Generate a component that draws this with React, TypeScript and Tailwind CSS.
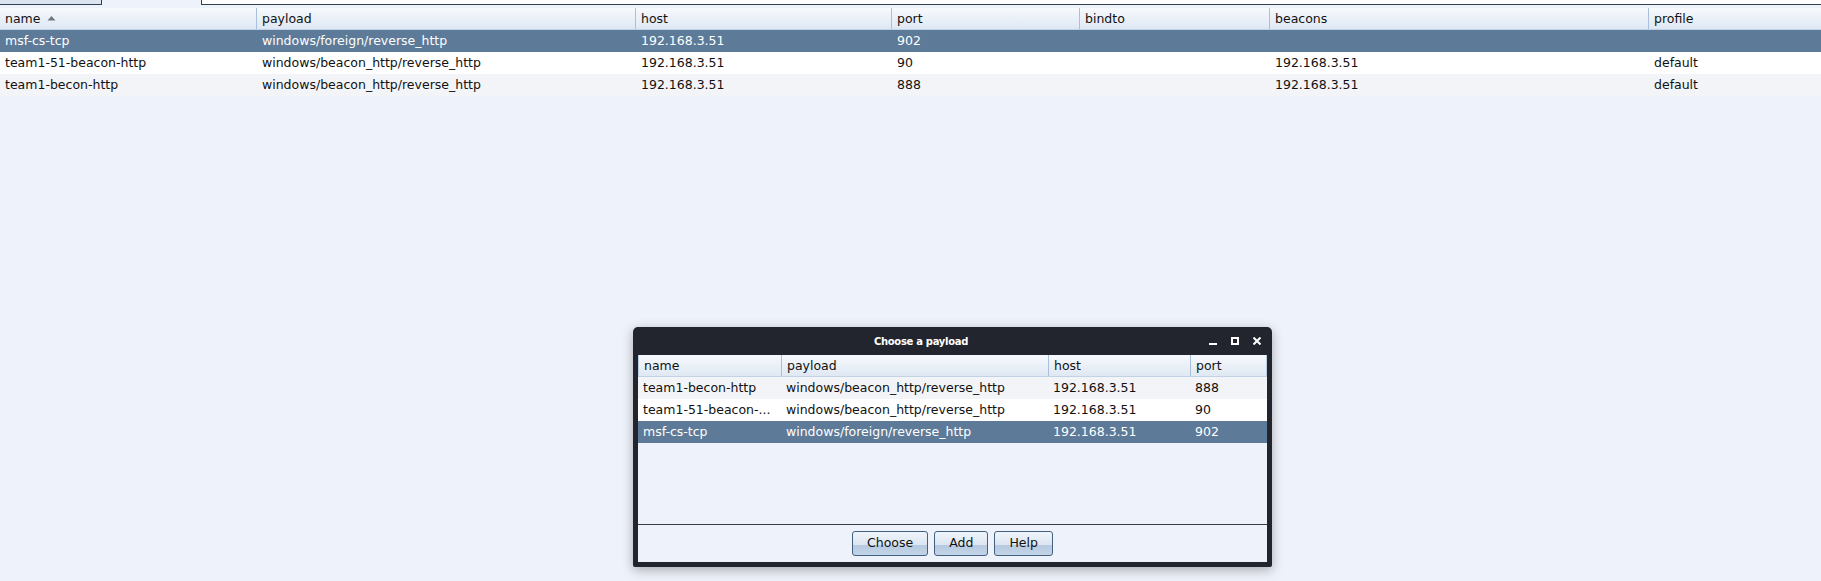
import React from 'react'

const font = { fontFamily: '"DejaVu Sans", "Liberation Sans", sans-serif' }

type Col = { key: string; label: string; w: string }

const mainCols: Col[] = [
  { key: 'name', label: 'name', w: 'w-[257px]' },
  { key: 'payload', label: 'payload', w: 'w-[379px]' },
  { key: 'host', label: 'host', w: 'w-[256px]' },
  { key: 'port', label: 'port', w: 'w-[188px]' },
  { key: 'bindto', label: 'bindto', w: 'w-[190px]' },
  { key: 'beacons', label: 'beacons', w: 'w-[379px]' },
  { key: 'profile', label: 'profile', w: 'flex-1' },
]

const mainRows = [
  { name: 'msf-cs-tcp', payload: 'windows/foreign/reverse_http', host: '192.168.3.51', port: '902', bindto: '', beacons: '', profile: '', sel: true },
  { name: 'team1-51-beacon-http', payload: 'windows/beacon_http/reverse_http', host: '192.168.3.51', port: '90', bindto: '', beacons: '192.168.3.51', profile: 'default' },
  { name: 'team1-becon-http', payload: 'windows/beacon_http/reverse_http', host: '192.168.3.51', port: '888', bindto: '', beacons: '192.168.3.51', profile: 'default' },
]

const dlgCols: Col[] = [
  { key: 'name', label: 'name', w: 'w-[143px]' },
  { key: 'payload', label: 'payload', w: 'w-[267px]' },
  { key: 'host', label: 'host', w: 'w-[142px]' },
  { key: 'port', label: 'port', w: 'flex-1' },
]

const dlgRows = [
  { name: 'team1-becon-http', payload: 'windows/beacon_http/reverse_http', host: '192.168.3.51', port: '888' },
  { name: 'team1-51-beacon-...', payload: 'windows/beacon_http/reverse_http', host: '192.168.3.51', port: '90' },
  { name: 'msf-cs-tcp', payload: 'windows/foreign/reverse_http', host: '192.168.3.51', port: '902', sel: true },
]

function Header({ cols, sortFirst }: { cols: Col[]; sortFirst?: boolean }) {
  return (
    <div className="flex h-[22px] bg-gradient-to-b from-[#f7f9fd] to-[#dfe8f3] border-b border-[#c3d3e6]">
      {cols.map((c, i) => (
        <div
          key={c.key}
          className={`${c.w} shrink-0 flex items-center pl-[5px] pt-[1px] border-r border-[#a9c0da] text-[#111] ${i === cols.length - 1 ? 'border-r-0' : ''}`}
        >
          {c.label}
          {sortFirst && i === 0 && (
            <svg width="9" height="6" viewBox="0 0 9 6" className="ml-[7px] mb-[2px]">
              <path d="M0.5 5.5 L4.5 1 L8.5 5.5 Z" fill="#707780" />
            </svg>
          )}
        </div>
      ))}
    </div>
  )
}

function Rows({ cols, rows }: { cols: Col[]; rows: any[] }) {
  return (
    <>
      {rows.map((r, i) => {
        const bg = r.sel ? 'bg-[#5d7a98] text-white' : i % 2 === 0 ? 'bg-[#f3f4f8] text-[#111]' : 'bg-white text-[#111]'
        return (
          <div key={i} className={`flex h-[22px] ${bg}`}>
            {cols.map((c) => (
              <div key={c.key} className={`${c.w} shrink-0 flex items-center pl-[5px] pt-[1px] whitespace-nowrap overflow-hidden`}>
                {r[c.key]}
              </div>
            ))}
          </div>
        )
      })}
    </>
  )
}

function Btn({ label }: { label: string }) {
  return (
    <button className="h-[25px] px-[14px] rounded-[3px] border border-[#44607f] bg-[linear-gradient(to_bottom,#f0f5fb_0%,#dbe5f0_55%,#b6c9df_56%,#c3d4e7_100%)] text-[12.5px] text-[#111] leading-none">
      {label}
    </button>
  )
}

export default function App() {
  return (
    <div className="relative w-[1821px] h-[581px] overflow-hidden bg-[#eef2fa] text-[12.5px]" style={font}>
      {/* tab strip */}
      <div className="flex h-[8px] items-start">
        <div className="w-[102px] h-[5px] bg-[#dbe4ef] border-r border-b border-[#33404f]" />
        <div className="w-[99px]" />
        <div className="flex-1 h-[5px] bg-white border-l border-b border-[#33404f]" />
      </div>

      {/* listeners table */}
      <Header cols={mainCols} sortFirst />
      <Rows cols={mainCols} rows={mainRows} />

      {/* dialog */}
      <div className="absolute left-[633px] top-[327px] w-[639px] flex flex-col bg-[#22252e] rounded-t-[5px] rounded-b-[2px] shadow-[0_3px_12px_rgba(0,0,0,0.3)]">
        <div className="h-[28px] flex items-center relative">
          <div className="flex-1 text-center text-white font-bold text-[10px] tracking-[-0.3px]">Choose a payload</div>
          <div className="flex items-center gap-[14px] pr-[11px]">
            <svg width="8" height="8" viewBox="0 0 8 8">
              <rect x="0" y="6" width="8" height="2" fill="#fff" />
            </svg>
            <svg width="8" height="8" viewBox="0 0 8 8">
              <rect x="1" y="1" width="6" height="6" fill="none" stroke="#fff" strokeWidth="2" />
            </svg>
            <svg width="8" height="8" viewBox="0 0 8 8">
              <path d="M0.5 0.5 L7.5 7.5 M7.5 0.5 L0.5 7.5" stroke="#fff" strokeWidth="2" />
            </svg>
          </div>
        </div>
        <div className="mx-[5px] mb-[5px] bg-[#eef2fa]">
          <div className="h-[170px] border-b border-[#3a3d45] flex flex-col">
            <div className="border-x border-[#b9cde3]">
              <Header cols={dlgCols} />
            </div>
            <Rows cols={dlgCols} rows={dlgRows} />
          </div>
          <div className="h-[37px] flex items-center justify-center gap-[6px]">
            <Btn label="Choose" />
            <Btn label="Add" />
            <Btn label="Help" />
          </div>
        </div>
      </div>
    </div>
  )
}
